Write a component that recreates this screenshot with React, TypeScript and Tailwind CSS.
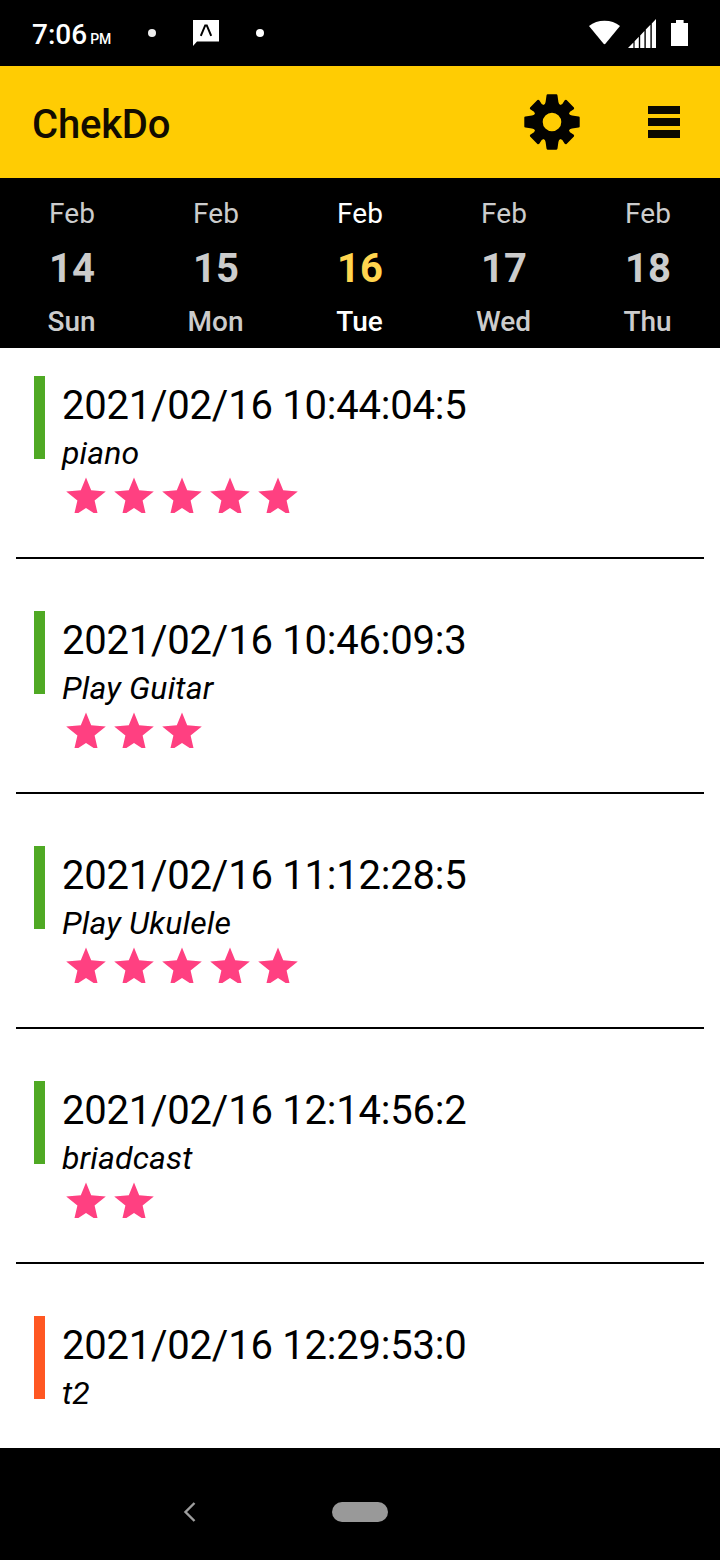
import React from "react";

type Task = {
  time: string;
  title: string;
  stars: number;
  done: boolean;
};

const days = [
  { month: "Feb", date: 14, day: "Sun" },
  { month: "Feb", date: 15, day: "Mon" },
  { month: "Feb", date: 16, day: "Tue", active: true },
  { month: "Feb", date: 17, day: "Wed" },
  { month: "Feb", date: 18, day: "Thu" },
];

const tasks: Task[] = [
  { time: "2021/02/16 10:44:04:5", title: "piano", stars: 5, done: true },
  { time: "2021/02/16 10:46:09:3", title: "Play Guitar", stars: 3, done: true },
  { time: "2021/02/16 11:12:28:5", title: "Play Ukulele", stars: 5, done: true },
  { time: "2021/02/16 12:14:56:2", title: "briadcast", stars: 2, done: true },
  { time: "2021/02/16 12:29:53:0", title: "t2", stars: 0, done: false },
];

const StatusBar: React.FC = () => {
  return (
    <div className="h-[66px] bg-black text-white flex items-start justify-between pl-8 pr-8">
      <div className="flex items-start">
        <div className="flex items-baseline w-[116px] pt-[19px] leading-8">
          <span className="text-[28px] font-medium">7:06</span>
          <span className="text-[14px] font-medium ml-[3px] tracking-[-0.1px]">
            PM
          </span>
        </div>
        <div className="w-2 h-2 rounded-full bg-[#eeeeee] mt-[29px]" />
        <svg viewBox="0 0 26 26" className="w-[26px] h-[26px] ml-[37px] mt-5">
          <path d="M0 0h26v21.5H4L0 26z" fill="#fff" />
          <path
            d="M7.8 15.8L12.2 5.4h1.6L18.2 15.8"
            fill="none"
            stroke="#000"
            strokeWidth="2"
          />
        </svg>
        <div className="w-2 h-2 rounded-full bg-white ml-[37px] mt-[29px]" />
      </div>
      <div className="flex items-start">
        <svg viewBox="0 0 32 26" className="w-8 h-[26px] mt-5">
          <path
            d="M1 6Q7.5.8 16.5.8T32 6L17.6 23.6q-1.1 1.2-2.2 0z"
            fill="#fff"
          />
        </svg>
        <svg viewBox="0 0 28 29" className="w-7 h-[29px] ml-2 mt-[19px]">
          <path
            d="M0 29L5.4 23.4V29zM6.6 22.2L10.8 17.8V29H6.6zM12.2 16.4L16.4 12V29H12.2zM17.8 10.6L22.4 5.8V29H17.8zM23.8 4.4L28 0V29H23.8z"
            fill="#fff"
          />
        </svg>
        <svg viewBox="0 0 17 26" className="w-[17px] h-[26px] ml-[15px] mt-5">
          <path d="M5 0h7.6v3H17v23H0V3h5z" fill="#fff" />
        </svg>
      </div>
    </div>
  );
};

const Header: React.FC = () => {
  return (
    <div className="h-28 bg-[#ffcc03] flex items-center justify-between pl-8 pr-10">
      <h1 className="text-[40px] leading-[48px] font-medium text-[#120c00] tracking-[-0.2px] mt-[6px]">
        ChekDo
      </h1>
      <div className="flex items-center">
        <button className="mr-[68px]">
          <svg viewBox="-28 -28 56 56" className="w-14 h-14">
            <g fill="#030200">
              <path
                fillRule="evenodd"
                d="M0-19.2A19.2 19.2 0 1 1 0 19.2A19.2 19.2 0 1 1 0-19.2ZM0-9.3A9.3 9.3 0 1 0 0 9.3A9.3 9.3 0 1 0 0-9.3Z"
              />
              {[0, 90, 180, 270].map((angle) => (
                <path
                  key={angle}
                  d="M-7.4-17L-6.4-20L-5.5-26.6Q-5.3-27.7-4.4-27.7H4.4Q5.3-27.7 5.5-26.6L6.4-20L7.4-17z"
                  transform={`rotate(${angle})`}
                />
              ))}
              {[45, 135, 225, 315].map((angle) => (
                <path
                  key={angle}
                  d="M-6.4-17L-5.4-20L-6.4-24.4Q-6.2-25.6-5.2-25.8H5.2Q6.2-25.6 6.4-24.4L5.4-20L6.4-17z"
                  transform={`rotate(${angle})`}
                />
              ))}
            </g>
          </svg>
        </button>
        <button className="flex flex-col gap-1">
          <div className="w-8 h-2 bg-[#0b0800]" />
          <div className="w-8 h-2 bg-[#0b0800]" />
          <div className="w-8 h-2 bg-[#0b0800]" />
        </button>
      </div>
    </div>
  );
};

const Calendar: React.FC = () => {
  return (
    <div className="h-[170px] bg-black grid grid-cols-5 text-center">
      {days.map((item) => (
        <div
          key={item.date}
          className={`flex flex-col pt-5 ${
            item.active ? "text-white" : "text-[#cccccc]"
          }`}
        >
          <span className="text-[28px] leading-8">{item.month}</span>
          <span
            className={`text-[40px] leading-[48px] font-bold mt-[15px] ${
              item.active ? "text-[#ffd54f]" : ""
            }`}
          >
            {item.date}
          </span>
          <span className="text-[28px] leading-8 font-medium mt-[13px] pr-px">
            {item.day}
          </span>
        </div>
      ))}
    </div>
  );
};

const Star: React.FC = () => {
  return (
    <svg viewBox="0 0 24 24" className="w-12 h-12 shrink-0">
      <path
        d="M12 1.7L14.6 8.1L21.9 8.7L16.3 13.3L18.1 21L12 17L5.9 21L7.7 13.3L2.1 8.7L9.4 8.1z"
        fill="#ff4081"
      />
    </svg>
  );
};

const TaskItem: React.FC<{ task: Task }> = ({ task }) => {
  return (
    <div className="h-[235px] shrink-0 mx-4 border-b-2 border-black flex items-start pt-[52px] pl-[18px]">
      <div
        className={`w-[11px] h-[83px] mr-[17px] ${
          task.done ? "bg-[#4fa924]" : "bg-[#ff5722]"
        }`}
      />
      <div className="flex flex-col text-black">
        <h2 className="text-[40px] leading-[48px] tracking-[-0.22px] mt-[6px]">
          {task.time}
        </h2>
        <p className="text-[32px] leading-[38px] italic tracking-[0.15px] mt-1">
          {task.title}
        </p>
        <div className="flex h-[39px] overflow-hidden mt-[2px]">
          {Array.from({ length: task.stars }).map((_, i) => (
            <Star key={i} />
          ))}
        </div>
      </div>
    </div>
  );
};

const NavBar: React.FC = () => {
  return (
    <div className="h-28 bg-black grid grid-cols-3 items-center pt-4">
      <div className="pl-[183px]">
        <svg viewBox="0 0 14 20" className="w-[14px] h-5">
          <path
            d="M11.5 1L2.5 10l9 9"
            fill="none"
            stroke="#9e9e9e"
            strokeWidth="2.4"
          />
        </svg>
      </div>
      <div className="w-14 h-5 rounded-full bg-[#999999] mx-auto" />
    </div>
  );
};

const App: React.FC = () => {
  return (
    <div className="w-[720px] h-[1560px] bg-white flex flex-col overflow-hidden font-['Roboto',sans-serif]">
      <StatusBar />
      <Header />
      <Calendar />
      <div className="h-[1100px] overflow-hidden">
        {/* list is scrolled a little past the top */}
        <div className="flex flex-col -mt-6">
          {tasks.map((task) => (
            <TaskItem key={task.time} task={task} />
          ))}
        </div>
      </div>
      <NavBar />
    </div>
  );
};

export default App;
